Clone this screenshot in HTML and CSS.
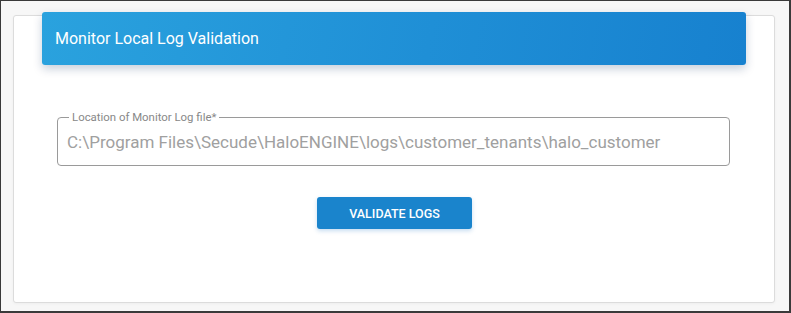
FILE: index.html
```html
<!DOCTYPE html>
<html>
<head>
<meta charset="utf-8">
<link rel="stylesheet" href="styles.css">
</head>
<body>
<div class="frame">
  <div class="card">
    <div class="card-header">Monitor Local Log Validation</div>
    <div class="field">
      <fieldset class="outline">
        <legend class="label">Location of Monitor Log file*</legend>
      </fieldset>
      <div class="value">C:\Program Files\Secude\HaloENGINE\logs\customer_tenants\halo_customer</div>
    </div>
    <div class="actions">
      <button class="btn">VALIDATE LOGS</button>
    </div>
  </div>
</div>
</body>
</html>
```
FILE: styles.css
```css
* { box-sizing: border-box; }
html, body { margin: 0; padding: 0; }
body {
  width: 791px;
  height: 313px;
  font-family: Roboto, "Liberation Sans", sans-serif;
  overflow: hidden;
}
.frame {
  width: 791px;
  height: 313px;
  background: #f7f7f7;
  border-style: solid;
  border-color: #3a3a3a;
  border-width: 1px 2px 2px 1px;
  padding: 14px 0 0 12px;
}
.card {
  width: 762px;
  height: 288px;
  background: #fff;
  border: 1px solid #dcdcdc;
  border-radius: 3px;
  box-shadow: 0 1px 3px rgba(0,0,0,0.04);
}
.card-header {
  margin: -4px 0 0 28px;
  width: 704px;
  height: 53px;
  border-radius: 3px;
  background: linear-gradient(100deg, #2aa2de 0%, #1f8fd6 55%, #1781cf 100%);
  box-shadow: 0 4px 10px rgba(0, 40, 90, 0.22);
  color: #fff;
  font-size: 16px;
  padding-left: 13px;
  display: flex;
  align-items: center;
}
.field {
  position: relative;
  margin: 52px 0 0 43px;
  width: 673px;
  height: 49px;
}
.outline {
  position: absolute;
  inset: -6px 0 0 0;
  margin: 0;
  padding: 0 0 0 11px;
  border: 1px solid #9a9a9a;
  border-radius: 4px;
}
.label {
  padding: 0 3px;
  font-size: 11.4px;
  line-height: 12px;
  color: #888;
}
.value {
  position: relative;
  padding: 15px 0 0 10px;
  font-size: 17px;
  color: #a0a0a0;
  white-space: nowrap;
}
.actions {
  display: flex;
  justify-content: center;
  margin-top: 31px;
}
.btn {
  width: 155px;
  height: 32px;
  border: none;
  border-radius: 3px;
  background: #1a84cc;
  color: #fff;
  font-family: Roboto, "Liberation Sans", sans-serif;
  font-size: 12.5px;
  font-weight: 500;
  box-shadow: 0 2px 4px rgba(30, 120, 200, 0.25);
  margin-left: 1px;
}
```
